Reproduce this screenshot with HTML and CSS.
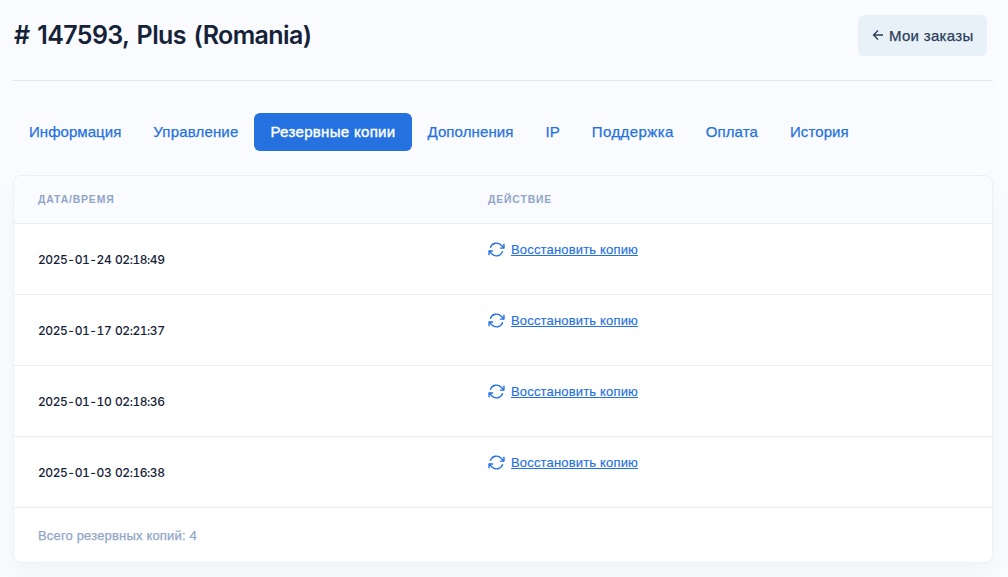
FILE: index.html
```html
<!DOCTYPE html>
<html lang="ru">
<head>
  <meta charset="UTF-8">
  <title># 147593, Plus (Romania)</title>
  <link rel="stylesheet" href="styles.css">
</head>
<body>
  <svg class="sprite" aria-hidden="true">
    <symbol id="icon-refresh" viewBox="0 0 24 24">
      <path d="M22.5 4.5V10h-5M1.5 19.5V14h5"/>
      <path d="M3.5 9a9 9 0 0 1 14.86-3.36L22 9.5M2 14.5l3.64 3.86A9 9 0 0 0 20.5 15"/>
    </symbol>
  </svg>

  <div class="container">
    <header class="header">
      <h1 class="title"># 147593, Plus (Romania)</h1>
      <a href="#" class="btn">
        <svg class="arrow" viewBox="0 0 12 12"><path d="M11 6H1.5M6 1.5L1.5 6 6 10.5"/></svg>
        <span>Мои заказы</span>
      </a>
    </header>

    <nav class="tabs">
      <a href="#" class="tab">Информация</a>
      <a href="#" class="tab">Управление</a>
      <a href="#" class="tab active">Резервные копии</a>
      <a href="#" class="tab">Дополнения</a>
      <a href="#" class="tab">IP</a>
      <a href="#" class="tab">Поддержка</a>
      <a href="#" class="tab">Оплата</a>
      <a href="#" class="tab">История</a>
    </nav>

    <div class="card">
      <table class="table">
        <thead>
          <tr>
            <th class="col-date">Дата/время</th>
            <th>Действие</th>
          </tr>
        </thead>
        <tbody>
          <tr>
            <td class="date">2025-01-24 02:18:49</td>
            <td class="action"><a href="#" class="restore"><svg class="refresh"><use href="#icon-refresh"/></svg><span>Восстановить копию</span></a></td>
          </tr>
          <tr>
            <td class="date">2025-01-17 02:21:37</td>
            <td class="action"><a href="#" class="restore"><svg class="refresh"><use href="#icon-refresh"/></svg><span>Восстановить копию</span></a></td>
          </tr>
          <tr>
            <td class="date">2025-01-10 02:18:36</td>
            <td class="action"><a href="#" class="restore"><svg class="refresh"><use href="#icon-refresh"/></svg><span>Восстановить копию</span></a></td>
          </tr>
          <tr>
            <td class="date">2025-01-03 02:16:38</td>
            <td class="action"><a href="#" class="restore"><svg class="refresh"><use href="#icon-refresh"/></svg><span>Восстановить копию</span></a></td>
          </tr>
        </tbody>
      </table>
      <div class="card-footer">Всего резервных копий: 4</div>
    </div>
  </div>
</body>
</html>
```
FILE: styles.css
```css
* {
  box-sizing: border-box;
}

body {
  margin: 0;
  height: 577px;
  overflow: hidden;
  background-color: #f9fbfe;
  color: #152238;
  font-family: "Liberation Sans", Arial, sans-serif;
  font-size: 15px;
}

a {
  color: #2571e0;
  text-decoration: none;
}

.sprite {
  display: none;
}

.container {
  padding: 0 15px 0 13px;
}

.header {
  display: flex;
  justify-content: space-between;
  height: 81px;
  padding: 15px 6px 0 1px;
  border-bottom: 1px solid #dce7f7;
}

.title {
  margin: 0;
  font-family: Inter, sans-serif;
  font-size: 25px;
  font-weight: 600;
  line-height: 41px;
  letter-spacing: -0.6px;
  word-spacing: 2px;
}

.btn {
  display: flex;
  align-items: center;
  gap: 5px;
  width: 129px;
  height: 41px;
  padding-left: 14px;
  border-radius: 6px;
  background-color: #e8f0f8;
  color: #283e59;
  letter-spacing: 0.3px;
  white-space: nowrap;
  -webkit-text-stroke: 0.25px;
}

.arrow {
  width: 12px;
  height: 12px;
  margin-top: -2px;
  fill: none;
  stroke: #283e59;
  stroke-width: 1.3;
}

.tabs {
  display: flex;
  margin-top: 32px;
}

.tab {
  padding: 0 16px;
  border-radius: 6px;
  line-height: 38px;
  letter-spacing: 0.1px;
  white-space: nowrap;
  -webkit-text-stroke: 0.25px;
}

.tab:first-child {
  letter-spacing: 0.05px;
}

.tab:nth-child(2) {
  letter-spacing: 0.17px;
}

.tab:nth-child(6) {
  letter-spacing: 0.4px;
}

.tab.active {
  background-color: #2571e0;
  color: #fff;
  letter-spacing: 0.32px;
  -webkit-text-stroke: 0.4px;
}

.card {
  margin-top: 24px;
  border: 1px solid #eaf0f7;
  border-radius: 8px;
  background-color: #fff;
  box-shadow: 0 12px 24px rgba(18, 38, 63, 0.03);
  overflow: hidden;
}

.table {
  width: 100%;
  border-collapse: collapse;
  table-layout: fixed;
}

th {
  height: 47px;
  padding: 0 24px;
  border-bottom: 1px solid #e8eef8;
  background-color: #f9fbfe;
  color: #8fa5c8;
  font-size: 10.4px;
  letter-spacing: 0.85px;
  text-align: left;
  text-transform: uppercase;
}

.col-date {
  width: 450px;
}

td {
  height: 71px;
  padding: 0 24px;
  border-bottom: 1px solid #e8eef8;
  font-size: 13px;
}

.date {
  padding-top: 2px;
  font-family: Inter, sans-serif;
  font-size: 12px;
  font-weight: 500;
  font-variant-numeric: tabular-nums;
  letter-spacing: -0.45px;
  word-spacing: 1px;
}

.action {
  padding-top: 17px;
  vertical-align: top;
}

.restore {
  display: flex;
  align-items: center;
  gap: 6px;
  letter-spacing: 0.17px;
}

.restore span {
  text-decoration: underline;
  -webkit-text-stroke: 0.15px;
}

.refresh {
  width: 17px;
  height: 17px;
  fill: none;
  stroke: #2571e0;
  stroke-width: 2;
  stroke-linecap: round;
  stroke-linejoin: round;
}

.card-footer {
  height: 54px;
  padding: 0 24px;
  color: #8fa5c8;
  font-size: 13px;
  line-height: 56px;
  letter-spacing: 0.17px;
  -webkit-text-stroke: 0.25px;
}
```
